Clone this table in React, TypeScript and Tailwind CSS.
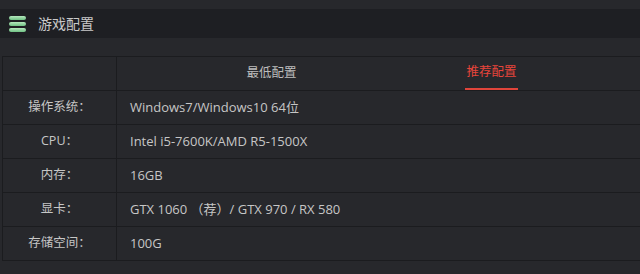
const rows = [
  { label: "操作系统：", value: "Windows7/Windows10 64位" },
  { label: "CPU：", value: "Intel i5-7600K/AMD R5-1500X" },
  { label: "内存：", value: "16GB" },
  { label: "显卡：", value: "GTX 1060 （荐）/ GTX 970 / RX 580" },
  { label: "存储空间：", value: "100G" },
];

function MenuIcon() {
  return (
    <svg width="17" height="18" viewBox="0 0 17 18" aria-hidden="true">
      <defs>
        <linearGradient id="g" x1="0" y1="0" x2="0" y2="1">
          <stop offset="0" stopColor="#b5e8bd" />
          <stop offset="1" stopColor="#6fc184" />
        </linearGradient>
      </defs>
      <rect x="0" y="1" width="17" height="4" rx="2" fill="url(#g)" />
      <rect x="0" y="7" width="17" height="4" rx="2" fill="url(#g)" />
      <rect x="0" y="13" width="17" height="4" rx="2" fill="url(#g)" />
    </svg>
  );
}

export default function App() {
  return (
    <div
      className="w-[640px] h-[274px] overflow-hidden bg-[#27282c] pt-[9px]"
      style={{ fontFamily: '"Open Sans", "Noto Sans CJK SC", sans-serif' }}
    >
      {/* title bar */}
      <div className="flex items-center h-[29px] bg-[#1e1f23] pl-[9px] gap-[12px]">
        <MenuIcon />
        <span className="text-[14px] text-[#c9c9c9]">游戏配置</span>
      </div>

      {/* table */}
      <div className="mt-[18px] ml-[2px] border-t border-l border-[#1b1c1f]">
        <div className="flex h-[34px] border-b border-[#1b1c1f]">
          <div className="w-[114px] border-r border-[#1b1c1f]" />
          <div className="flex flex-1 justify-center pl-[6px]">
            <div className="w-[220px] flex justify-center">
              <span className="flex items-center text-[12.5px] text-[#bdbdbd]">最低配置</span>
            </div>
            <div className="w-[220px] flex justify-center">
              <span className="flex items-center text-[12.5px] text-[#e8453b] border-b-2 border-[#e0453b] px-[1px]">
                推荐配置
              </span>
            </div>
          </div>
        </div>
        {rows.map((r) => (
          <div key={r.label} className="flex h-[34px] border-b border-[#1b1c1f] text-[#c6c6c6]">
            <div className="w-[114px] flex items-center justify-center border-r border-[#1b1c1f] text-[12.5px]">
              {r.label}
            </div>
            <div className="flex items-center pl-[13px] text-[13px]">{r.value}</div>
          </div>
        ))}
      </div>
    </div>
  );
}
